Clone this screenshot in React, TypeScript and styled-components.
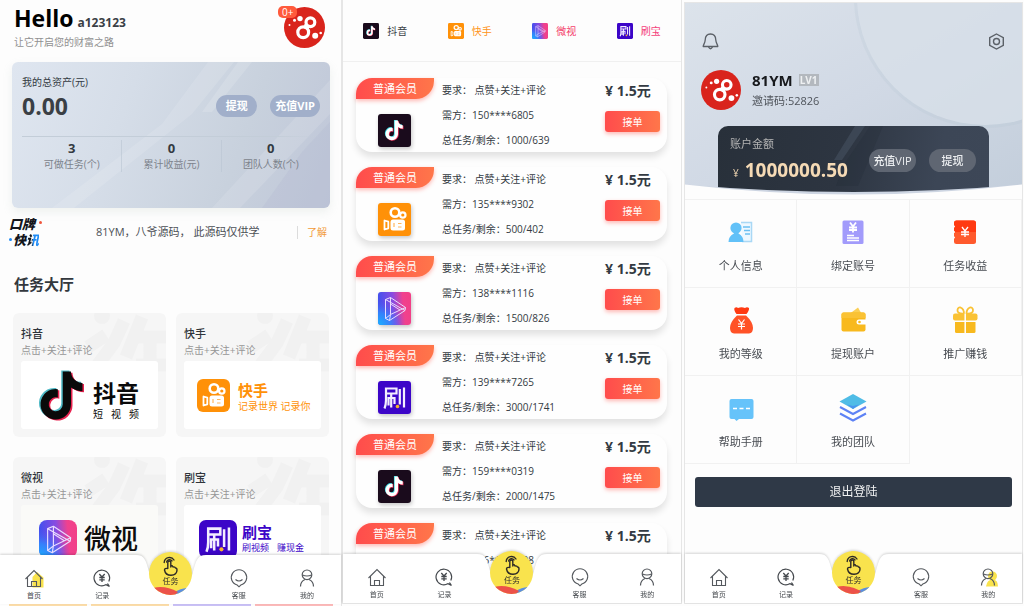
import React, { useId } from "react";
import styled, { createGlobalStyle } from "styled-components";

const GlobalStyle = createGlobalStyle`
  * { box-sizing: border-box; margin: 0; }
  body {
    background: #fdfdfd;
    color: #333a42;
    font-family: "Open Sans", "Noto Sans CJK SC", sans-serif;
    font-size: 10px;
    line-height: 16px;
  }
  button { font: inherit; border: 0; padding: 0; cursor: pointer; }
  a { color: inherit; text-decoration: none; }
  svg { display: block; flex: none; }
`;

/* ---------- shell ---------- */

const Screens = styled.div`
  display: grid;
  grid-template-columns: 342fr 342fr 340fr;
  height: 100vh;
  min-height: 480px;
  overflow: hidden;
`;

const Phone = styled.section<{ $variant: "home" | "tasks" | "mine" }>`
  position: relative;
  min-width: 0;
  min-height: 0;
  display: flex;
  flex-direction: column;
  background: #fdfdfd;
  border: solid #e6e6e6;
  border-width: ${p => (p.$variant === "home" ? "0 1px 0 0" : p.$variant === "tasks" ? "0 1px 1px" : "1px")};
  margin: ${p => (p.$variant === "home" ? "0" : p.$variant === "tasks" ? "0 2px 2px 0" : "2px 1px 2px 0")};
`;

const Scroll = styled.main`
  flex: 1;
  min-height: 0;
  overflow-y: auto;
  scrollbar-width: none;
`;

/* ---------- logos ---------- */

const Octopus = ({ size }: { size: number }) => (
  <svg width={size} height={size} viewBox="0 0 41 41" aria-hidden="true">
    <circle cx="20.5" cy="20.5" r="20.5" fill="#d9241c" />
    <g fill="none" stroke="#fff" strokeWidth="3.2">
      <circle cx="26.4" cy="15.2" r="4.4" />
      <circle cx="19.2" cy="25.2" r="5.4" />
    </g>
    <g fill="#fff">
      <path d="M20.500 17l5 2.500l-1.500 4l-4.500-2.500z" />
      <circle cx="16" cy="11.600" r="2.700" />
      <circle cx="10.500" cy="13.200" r="1.500" />
      <circle cx="5.500" cy="18" r="1" />
      <circle cx="31.200" cy="28.800" r="3" />
      <circle cx="36.700" cy="26" r="1.300" />
    </g>
  </svg>
);

const NOTE =
  "M448,209.91a210.06,210.06,0,0,1-122.77-39.25V349.38A162.55,162.55,0,1,1,185,188.31V278.2a74.62,74.62,0,1,0,52.23,71.18V0l88,0a121.18,121.18,0,0,0,1.86,22.17h0A122.18,122.18,0,0,0,381,102.39a121.43,121.43,0,0,0,67,20.14Z";

const DouyinNote = ({ width, height, fill }: { width: number; height: number; fill: string }) => (
  <svg width={width} height={height} viewBox="-16 -16 480 544" aria-hidden="true">
    <path d={NOTE} fill="#4fb9c6" transform="translate(-16 -12)" />
    <path d={NOTE} fill="#e8224f" transform="translate(16 12)" />
    <path d={NOTE} fill={fill} />
  </svg>
);

const DouyinApp = ({ size }: { size: number }) => (
  <svg width={size} height={size} viewBox="0 0 33 33" aria-hidden="true">
    <rect width="33" height="33" rx="3" fill="#1a0b1c" />
    <g transform="translate(7.500 6.500) scale(.0385)">
      <path d={NOTE} fill="#35d6e0" transform="translate(-18 -16)" />
      <path d={NOTE} fill="#f0325c" transform="translate(18 16)" />
      <path d={NOTE} fill="#fff" />
    </g>
  </svg>
);

const KuaishouApp = ({ size, radius = 3 }: { size: number; radius?: number }) => (
  <svg width={size} height={size} viewBox="0 0 33 33" aria-hidden="true">
    <rect width="33" height="33" rx={radius} fill="#ff9108" />
    <g fill="none" stroke="#fff">
      <circle cx="17" cy="9.500" r="4.300" strokeWidth="2.600" />
      <circle cx="24.800" cy="12" r="2.700" strokeWidth="2.200" />
      <path d="M6.500 17.500l3.800 1.200v6.600l-3.800 1.200z" strokeWidth="1.800" strokeLinejoin="round" />
    </g>
    <rect x="12.500" y="16.500" width="14.500" height="11" rx="2.500" fill="#fff" />
    <path d="M16 20v4M20 20.500h3.500M20 24h3.500" stroke="#ffb760" strokeWidth="1.200" />
  </svg>
);

const WeishiApp = ({ size, radius = 3 }: { size: number; radius?: number }) => {
  const id = useId();
  return (
    <svg width={size} height={size} viewBox="0 0 33 33" aria-hidden="true">
      <defs>
        <linearGradient id={id} x1="0" y1=".2" x2="1" y2=".1">
          <stop offset="0" stopColor="#4150ee" />
          <stop offset=".45" stopColor="#8a4be0" />
          <stop offset=".75" stopColor="#f0418e" />
          <stop offset="1" stopColor="#f23f86" />
        </linearGradient>
        <radialGradient id={id + "b"} cx="0" cy="1" r=".75">
          <stop offset="0" stopColor="#19b4ff" />
          <stop offset=".5" stopColor="#2f8dff" stopOpacity=".8" />
          <stop offset="1" stopColor="#5a5cf0" stopOpacity="0" />
        </radialGradient>
      </defs>
      <rect width="33" height="33" rx={radius} fill={`url(#${id})`} />
      <rect width="33" height="33" rx={radius} fill={`url(#${id}b)`} />
      <g fill="none" stroke="#e9dcff" strokeWidth="1" strokeLinejoin="round">
        <path d="M7.500 7.500L12.500 5.500L27.500 15.500L27 18.500L11.500 28.500L7.500 26.500Z" />
        <path d="M12.500 5.500V22.500L27.500 15.500M7.500 7.500L27 18.500M12.500 22.500L7.500 26.500M12.500 22.500L11.500 28.500M12.500 12L22 18" />
      </g>
    </svg>
  );
};

const ShuabaoApp = ({ size, radius = 3 }: { size: number; radius?: number }) => (
  <svg width={size} height={size} viewBox="0 0 33 33" aria-hidden="true">
    <rect width="33" height="33" rx={radius} fill="#3c05c8" />
    <g fill="none" stroke="#f3eeff" strokeWidth="2.200">
      <path d="M6.500 27.500Q8 24 8 19V7.500h10.500v5H8M13.200 13v13.500M10.500 24.500v-7.500h6V23" />
      <path d="M21.800 8v15.500M26 6.500v20" />
    </g>
    <circle cx="19.500" cy="25.500" r="1.800" fill="#f7b52c" />
  </svg>
);

/* ---------- bottom navigation ---------- */

const Dock = styled.div`
  position: absolute;
  left: 0;
  right: 0;
  bottom: 0;
`;

const NavBar = styled.nav`
  position: relative;
  height: 49px;
  filter: drop-shadow(0 -1px 1px rgba(0, 0, 0, 0.16));
`;

const NavBack = styled.div`
  position: absolute;
  inset: 0;
  display: flex;
`;

const NavSide = styled.span`
  flex: 1;
  background: #fff;
`;

const NavItems = styled.div`
  position: relative;
  display: grid;
  grid-template-columns: repeat(5, 1fr);
  height: 49px;
`;

const NavItem = styled.a`
  display: flex;
  flex-direction: column;
  align-items: center;
  padding-top: 13px;
  gap: 2px;
  color: #44484d;
  font-size: 7px;
  line-height: 12px;
`;

const NavCenter = styled.a`
  position: relative;
  justify-self: center;
  width: 43px;
  height: 43px;
  margin-top: -3px;
  border-radius: 50%;
  overflow: hidden;
  background: #f9e34d;
  display: flex;
  flex-direction: column;
  align-items: center;
  padding-top: 4px;
  color: #33302a;
  font-size: 8px;
  line-height: 10px;
`;

const NavSplash = styled.svg`
  position: absolute;
  left: 0;
  bottom: 0;
`;

const Strips = styled.div`
  display: flex;
  gap: 4px;
  height: 2px;
  padding: 0 8px 0 9px;
`;

const Strip = styled.span<{ $color: string }>`
  flex: 1;
  background: ${p => p.$color};
`;

const HomeIcon = ({ active }: { active?: boolean }) => (
  <svg width="20" height="20" viewBox="0 0 20 20" aria-hidden="true">
    {active && <path d="M13 4l6.500 5.500V19.500H8.500V9z" fill="#f9e34d" />}
    <path d="M1.500 11L10 2.500L18.500 11M3.500 9.500V18.500H16.500V9.500M7.500 18.500V13.500H12.500V18.500" fill="none" stroke="#55595e" strokeWidth="1.100" />
  </svg>
);

const RecordIcon = () => (
  <svg width="20" height="20" viewBox="0 0 20 20" fill="none" stroke="#44484d" strokeWidth="1.200" aria-hidden="true">
    <path d="M16.800 13.500A7.800 7.800 0 1 0 14 16.600M14 16.600l3.500 1.900M17.500 18.500l-2-3" />
    <path d="M7.300 6l2.700 3l2.700-3M10 9v5M7.300 9.500h5.400M7.300 11.800h5.400" strokeWidth="1.300" />
  </svg>
);

const ServiceIcon = () => (
  <svg width="20" height="20" viewBox="0 0 20 20" fill="none" stroke="#55595e" strokeWidth="1.100" aria-hidden="true">
    <path d="M8.200 17A7.700 7.700 0 1 1 11.800 17L10 18.800Z" />
    <path d="M6.500 11.500q3.500 3 7 0" />
  </svg>
);

const MineIcon = ({ active }: { active?: boolean }) => (
  <svg width="20" height="20" viewBox="0 0 20 20" aria-hidden="true">
    {active && (
      <g fill="#f9e34d">
        <circle cx="14.500" cy="9" r="4.500" />
        <path d="M8 19.500q1-7 6.500-7t5.500 7z" />
      </g>
    )}
    <g fill="none" stroke="#55595e" strokeWidth="1.200">
      <circle cx="10" cy="6.800" r="4.800" />
      <path d="M3.500 18.500q0-5 4.500-7M16.500 18.500q0-5-4.500-7M5.500 7q4.500 2 9 0" />
    </g>
  </svg>
);

const TouchIcon = () => (
  <svg width="18" height="20" viewBox="0 0 18 20" fill="none" stroke="#2d2a26" strokeWidth="1.400" strokeLinecap="round" strokeLinejoin="round" aria-hidden="true">
    <path d="M3.200 6.500A5.300 5.300 0 0 1 13 4" />
    <path d="M5.600 6A3 3 0 0 1 11 5" />
    <path d="M6.800 12.500V6.500a1.500 1.500 0 0 1 3 0V11M9.800 9.500q2 0 2.200 1.500q2-.5 2.500 1q1.500 0 1.500 2q0 5-6 5.300q-5.500 0-6.500-5.300q0-2 3.300-1.500" />
  </svg>
);

const BottomNav = ({ active }: { active?: "home" | "mine" }) => (
  <NavBar aria-label="底部导航">
    <NavBack>
      <NavSide />
      <svg width="70" height="49" viewBox="0 0 70 49" aria-hidden="true">
        <path d="M0 0C9 0 10 6 13 17A22.500 22.500 0 0 0 57 17C60 6 61 0 70 0V49H0Z" fill="#fff" />
      </svg>
      <NavSide />
    </NavBack>
    <NavItems>
      <NavItem href="#home"><HomeIcon active={active === "home"} />首页</NavItem>
      <NavItem href="#record"><RecordIcon />记录</NavItem>
      <NavCenter href="#tasks">
        <TouchIcon />
        任务
        <NavSplash width="43" height="8" viewBox="0 0 43 8" aria-hidden="true">
          <path d="M26 5q6-4 14-4v7H26z" fill="#5b8fe0" />
          <path d="M4 1q12-3 25 4l-3 3H8z" fill="#ec5249" />
        </NavSplash>
      </NavCenter>
      <NavItem href="#service"><ServiceIcon />客服</NavItem>
      <NavItem href="#mine"><MineIcon active={active === "mine"} />我的</NavItem>
    </NavItems>
  </NavBar>
);

/* ---------- home ---------- */

const HomeHeader = styled.header`
  display: flex;
  justify-content: space-between;
  height: 62px;
  padding: 3px 16px 0 14px;
`;

const Greeting = styled.h1`
  display: flex;
  align-items: baseline;
  gap: 4px;
  height: 30px;
  color: #000;
  font-size: 23px;
  line-height: 30px;
  font-weight: 700;
`;

const UserName = styled.span`
  color: #3a3f45;
  font-size: 12px;
  line-height: 16px;
`;

const Slogan = styled.p`
  color: #909090;
  line-height: 18px;
`;

const AvatarBox = styled.div`
  position: relative;
  height: 41px;
  margin-top: 4px;
`;

const Badge = styled.span`
  position: absolute;
  left: -6px;
  top: -1px;
  padding: 0 4px;
  border-radius: 5px;
  background: #ff5a3c;
  color: #fff;
  font-size: 10px;
  line-height: 12px;
`;

const AssetCard = styled.section`
  position: relative;
  overflow: hidden;
  margin: 0 11px 0 12px;
  padding: 12px 10px 36px;
  border-radius: 6px;
  background: linear-gradient(110deg, #dfe6f0 0%, #d5dde8 35%, #c8d1dd 70%, #bfc6d8 100%);
  box-shadow: 0 4px 10px rgba(160, 180, 170, 0.16);
`;

const Shine = styled.svg`
  position: absolute;
  inset: 0;
  width: 100%;
  height: 100%;
`;

const AssetBody = styled.div`
  position: relative;
`;

const AssetRow = styled.div`
  display: flex;
  align-items: center;
  gap: 13px;
  height: 32px;
`;

const Balance = styled.strong`
  flex: 1;
  color: #3a3f45;
  font-size: 23px;
  line-height: 32px;
`;

const SoftPill = styled.button`
  height: 22px;
  padding: 0 5px;
  min-width: 41px;
  border-radius: 11px;
  background: #a1afca;
  color: #fff;
  font-size: 11px;
  font-weight: 700;
`;

const Stats = styled.dl`
  display: grid;
  grid-template-columns: repeat(3, 1fr);
  margin-top: 14px;
  padding-top: 4px;
  background: linear-gradient(90deg, #c3cdd8 85%, transparent) top / 100% 1px no-repeat;
`;

const Stat = styled.div`
  display: flex;
  flex-direction: column-reverse;
  text-align: center;
  & + & { border-left: 1px solid rgba(185, 196, 210, 0.6); }
`;

const StatLabel = styled.dt`
  color: #7d838c;
`;

const StatValue = styled.dd`
  font-size: 13px;
  font-weight: 700;
`;

const Notice = styled.div`
  display: flex;
  align-items: center;
  height: 36px;
  margin-top: 6px;
  padding: 0 14px 0 9px;
`;

const NoticeLogo = styled.div`
  position: relative;
  width: 36px;
  color: #14161c;
  font-size: 13px;
  line-height: 16px;
  font-weight: 900;
  font-style: italic;
`;

const NoticeLine = styled.div<{ $indent?: boolean }>`
  padding-left: ${p => (p.$indent ? "4px" : "0")};
`;

const BlueGlyph = styled.span`
  background: linear-gradient(90deg, #14161c 45%, #1f8bf5 55%);
  background-clip: text;
  -webkit-background-clip: text;
  color: transparent;
`;

const Dot = styled.i<{ $end?: boolean }>`
  position: absolute;
  width: 3px;
  height: 3px;
  border-radius: 50%;
  ${p => (p.$end ? "right: 3px; top: 5px; background: #f0553c;" : "left: 0; bottom: 7px; background: #1f8bf5;")}
`;

const NoticeText = styled.p`
  flex: 1;
  min-width: 0;
  margin: 0 31px 0 51px;
  overflow: hidden;
  white-space: pre;
  color: #4c5056;
  font-size: 11px;
`;

const NoticeMore = styled.a`
  padding-left: 9px;
  border-left: 1px solid #dcdcdc;
  line-height: 13px;
  color: #f29a38;
`;

const SectionTitle = styled.h2`
  margin: 24px 14px 19px;
  color: #33383e;
  font-size: 15px;
  line-height: 20px;
  font-weight: 700;
`;

const TaskGrid = styled.div`
  display: grid;
  grid-template-columns: 1fr 1fr;
  gap: 20px 10px;
  padding: 0 12px 60px 13px;
`;

const TaskCard = styled.a`
  position: relative;
  overflow: hidden;
  padding: 12px 8px 8px;
  border-radius: 6px;
  background: #f6f6f6;
`;

const Watermark = styled.svg`
  position: absolute;
  right: 0;
  top: 0;
`;

const TaskName = styled.h3`
  position: relative;
  color: #30353b;
  font-size: 11px;
  line-height: 17px;
  font-weight: 500;
`;

const TaskHint = styled.p`
  position: relative;
  color: #969696;
`;

const BrandPanel = styled.div<{ $gap: number; $start: number; $tint?: boolean }>`
  position: relative;
  display: flex;
  align-items: center;
  gap: ${p => p.$gap}px;
  height: 68px;
  margin-top: 3px;
  padding-left: ${p => p.$start}px;
  border-radius: 3px;
  background: ${p => (p.$tint ? "#fafaf8" : "#fff")};
`;

const BrandText = styled.div<{ $color: string; $top?: number }>`
  padding-top: ${p => p.$top ?? 0}px;
  color: ${p => p.$color};
  white-space: nowrap;
`;

const BrandName = styled.div<{ $size: number; $line: number; $weight?: number }>`
  font-size: ${p => p.$size}px;
  line-height: ${p => p.$line}px;
  font-weight: ${p => p.$weight ?? 700};
`;

const BrandSub = styled.div<{ $size: number }>`
  display: flex;
  justify-content: space-between;
  gap: 8px;
  font-size: ${p => p.$size}px;
  line-height: 14px;
`;

const TaskTile = ({ name, children }: { name: string; children: React.ReactNode }) => (
  <TaskCard href="#tasks">
    <Watermark width="82" height="90" viewBox="0 0 82 90" aria-hidden="true">
      <g fill="none" stroke="#f1f1f1" strokeWidth="13">
        <path d="M22 22L4 34M40 8L30 30L6 62M22 48V72M58 4L42 44M48 24H82M66 24V90M52 52H82" />
      </g>
      <circle cx="18" cy="3" r="8" fill="#f1f1f1" />
    </Watermark>
    <TaskName>{name}</TaskName>
    <TaskHint>点击+关注+评论</TaskHint>
    {children}
  </TaskCard>
);

const HomeScreen = () => (
  <Phone $variant="home">
    <Scroll>
      <HomeHeader>
        <div>
          <Greeting>Hello<UserName>a123123</UserName></Greeting>
          <Slogan>让它开启您的财富之路</Slogan>
        </div>
        <AvatarBox>
          <Octopus size={41} />
          <Badge>0+</Badge>
        </AvatarBox>
      </HomeHeader>

      <AssetCard>
        <Shine viewBox="0 0 318 146" preserveAspectRatio="none" aria-hidden="true">
          <path d="M196 0L150 62L40 146H62L180 52L222 0Z" fill="#fff" opacity=".12" />
          <path d="M226 0L190 50H200L240 0Z" fill="#fff" opacity=".14" />
          <path d="M318 18L200 146H228L318 52Z" fill="#fff" opacity=".12" />
          <path d="M318 60L290 90L250 146H318Z" fill="#b4bbd2" opacity=".3" />
        </Shine>
        <AssetBody>
          <p>我的总资产(元)</p>
          <AssetRow>
            <Balance>0.00</Balance>
            <SoftPill type="button">提现</SoftPill>
            <SoftPill type="button">充值VIP</SoftPill>
          </AssetRow>
          <Stats>
            <Stat><StatLabel>可做任务(个)</StatLabel><StatValue>3</StatValue></Stat>
            <Stat><StatLabel>累计收益(元)</StatLabel><StatValue>0</StatValue></Stat>
            <Stat><StatLabel>团队人数(个)</StatLabel><StatValue>0</StatValue></Stat>
          </Stats>
        </AssetBody>
      </AssetCard>

      <Notice>
        <NoticeLogo>
          <NoticeLine>口牌</NoticeLine>
          <NoticeLine $indent>快<BlueGlyph>讯</BlueGlyph></NoticeLine>
          <Dot $end />
          <Dot />
        </NoticeLogo>
        <NoticeText>81YM，八爷源码， 此源码仅供学</NoticeText>
        <NoticeMore href="#notice">了解</NoticeMore>
      </Notice>

      <SectionTitle>任务大厅</SectionTitle>
      <TaskGrid>
        <TaskTile name="抖音">
          <BrandPanel $start={18} $gap={9}>
            <DouyinNote width={45} height={51} fill="#0a0a0a" />
            <BrandText $color="#0a0a0a" $top={9}>
              <BrandName $size={23} $line={28}>抖音</BrandName>
              <BrandSub $size={10}><span>短</span><span>视</span><span>频</span></BrandSub>
            </BrandText>
          </BrandPanel>
        </TaskTile>
        <TaskTile name="快手">
          <BrandPanel $start={13} $gap={8}>
            <KuaishouApp size={33} radius={6} />
            <BrandText $color="#ff9108" $top={4}>
              <BrandName $size={15} $line={18}>快手</BrandName>
              <BrandSub $size={10}>记录世界 记录你</BrandSub>
            </BrandText>
          </BrandPanel>
        </TaskTile>
        <TaskTile name="微视">
          <BrandPanel $start={18} $gap={7} $tint>
            <WeishiApp size={38} radius={7} />
            <BrandText $color="#0d0d0d">
              <BrandName $size={27} $line={38} $weight={500}>微视</BrandName>
            </BrandText>
          </BrandPanel>
        </TaskTile>
        <TaskTile name="刷宝">
          <BrandPanel $start={15} $gap={5}>
            <ShuabaoApp size={38} radius={6} />
            <BrandText $color="#3c05c8">
              <BrandName $size={15} $line={18}>刷宝</BrandName>
              <BrandSub $size={9}><span>刷视频</span><span>赚现金</span></BrandSub>
            </BrandText>
          </BrandPanel>
        </TaskTile>
      </TaskGrid>
    </Scroll>
    <Dock>
      <BottomNav active="home" />
      <Strips>
        {["#fbdca8", "#fbdca8", "#c9c0f5", "#fbb9b9"].map((c, i) => <Strip key={i} $color={c} />)}
      </Strips>
    </Dock>
  </Phone>
);

/* ---------- task list ---------- */

const Tabs = styled.div`
  display: grid;
  grid-template-columns: repeat(4, 1fr);
  height: 62px;
  border-bottom: 1px solid #f0f0f0;
`;

const Tab = styled.button<{ $color: string }>`
  display: flex;
  align-items: center;
  justify-content: center;
  gap: 8px;
  background: none;
  color: ${p => p.$color};
`;

const OrderList = styled.ul`
  display: grid;
  gap: 15px;
  padding: 16px 14px 60px 13px;
  list-style: none;
`;

const Order = styled.li`
  display: grid;
  grid-template-columns: 86px 1fr 62px;
  height: 74px;
  border-radius: 16px;
  background: #fefefe;
  box-shadow: 0 5px 7px rgba(0, 0, 0, 0.11);
`;

const LevelTag = styled.div`
  width: 78px;
  margin-bottom: 15px;
  border-radius: 16px 0 18px 0;
  background: linear-gradient(90deg, #ff4c4c, #ff764a);
  box-shadow: 0 2px 4px rgba(255, 80, 70, 0.4);
  color: #fff;
  font-size: 11px;
  line-height: 21px;
  text-align: center;
`;

const OrderIcon = styled.div`
  width: 33px;
  margin-left: 22px;
  border-radius: 3px;
  box-shadow: 1px 2px 4px rgba(0, 0, 0, 0.22);
`;

const OrderInfo = styled.div`
  line-height: 25px;
  white-space: pre;
`;

const Price = styled.strong`
  display: block;
  font-size: 14px;
  line-height: 25px;
  font-weight: 700;
  white-space: nowrap;
`;

const TakeButton = styled.button`
  width: 55px;
  height: 21px;
  margin-top: 8px;
  border-radius: 3px;
  background: linear-gradient(90deg, #ff4c4c, #ff764a);
  box-shadow: 0 2px 4px rgba(255, 80, 70, 0.4);
  color: #fff;
`;

const orders = [
  { icon: DouyinApp, from: "150****6805", count: "1000/639" },
  { icon: KuaishouApp, from: "135****9302", count: "500/402" },
  { icon: WeishiApp, from: "138****1116", count: "1500/826" },
  { icon: ShuabaoApp, from: "139****7265", count: "3000/1741" },
  { icon: DouyinApp, from: "159****0319", count: "2000/1475" },
  { icon: KuaishouApp, from: "156****2208", count: "" },
];

const TasksScreen = () => (
  <Phone $variant="tasks">
    <Tabs>
      <Tab type="button" $color="#3a3f45"><DouyinApp size={16} />抖音</Tab>
      <Tab type="button" $color="#ff9420"><KuaishouApp size={16} />快手</Tab>
      <Tab type="button" $color="#f4426c"><WeishiApp size={16} />微视</Tab>
      <Tab type="button" $color="#f4427c"><ShuabaoApp size={16} />刷宝</Tab>
    </Tabs>
    <Scroll>
      <OrderList>
        {orders.map(({ icon: Icon, from, count }) => (
          <Order key={from}>
            <div>
              <LevelTag>普通会员</LevelTag>
              <OrderIcon><Icon size={33} /></OrderIcon>
            </div>
            <OrderInfo>
              <p>要求： 点赞+关注+评论</p>
              <p>需方：{from}</p>
              {count && <p>总任务/剩余：{count}</p>}
            </OrderInfo>
            <div>
              <Price>¥ 1.5元</Price>
              <TakeButton type="button">接单</TakeButton>
            </div>
          </Order>
        ))}
      </OrderList>
    </Scroll>
    <Dock><BottomNav /></Dock>
  </Phone>
);

/* ---------- mine ---------- */

const Hero = styled.header`
  position: relative;
  height: 192px;
  overflow: hidden;
  background: linear-gradient(150deg, #dce3eb 0%, #d1d9e5 50%, #c3cedb 100%);
`;

const HeroBody = styled.div`
  position: relative;
`;

const TopBar = styled.div`
  display: flex;
  justify-content: space-between;
  padding: 30px 17px 0;
`;

const IconButton = styled.button`
  background: none;
`;

const Profile = styled.div`
  display: flex;
  align-items: center;
  gap: 11px;
  margin: 19px 16px 15px;
`;

const ProfileName = styled.h2`
  display: flex;
  align-items: center;
  gap: 6px;
  color: #17191c;
  font-size: 15px;
  line-height: 22px;
  font-weight: 700;
`;

const Level = styled.span`
  padding: 0 1px;
  background: #b3b8be;
  color: #eef0f2;
  font-size: 10px;
  line-height: 12px;
  font-weight: 700;
`;

const InviteCode = styled.p`
  color: #4f545b;
  font-size: 11px;
  line-height: 20px;
`;

const Wallet = styled.section`
  position: relative;
  display: flex;
  gap: 13px;
  height: 80px;
  margin: 0 33px;
  padding: 10px 13px 0 12px;
  overflow: hidden;
  border-radius: 10px 10px 0 0;
  background: linear-gradient(100deg, #28303a 0%, #2d3541 45%, #3c4656 80%, #3d4757 100%);
`;

const WalletInfo = styled.div`
  position: relative;
  flex: 1;
  color: #b3b3b3;
  font-size: 11px;
`;

const Amount = styled.p`
  display: flex;
  align-items: baseline;
  gap: 6px;
  height: 24px;
  margin: 6px 0 0 3px;
  color: #f5dab5;
  font-size: 10px;
  line-height: 24px;
`;

const AmountValue = styled.strong`
  font-size: 19px;
`;

const WalletPill = styled.button`
  position: relative;
  width: 47px;
  height: 23px;
  margin-top: 13px;
  border-radius: 12px;
  background: #5f6672;
  color: #eceef0;
  font-size: 11px;
  font-weight: 500;
  white-space: nowrap;
`;

const HeroCurve = styled.svg`
  position: absolute;
  left: 0;
  bottom: 0;
  width: 100%;
  height: 12px;
`;

const MenuGrid = styled.nav`
  display: grid;
  grid-template-columns: repeat(3, 1fr);
  margin-top: 4px;
  border-top: 1px solid #f1f1f1;
`;

const MenuItem = styled.a`
  display: flex;
  flex-direction: column;
  align-items: center;
  gap: 10px;
  height: 88px;
  padding-top: 18px;
  border: solid #f1f1f1;
  border-width: 0 1px 1px 0;
  color: #484c52;
  font-size: 11px;
  line-height: 20px;
`;

const Logout = styled.button`
  display: block;
  width: calc(100% - 20px);
  height: 30px;
  margin: 13px 10px 70px;
  border-radius: 3px;
  background: #2f3947;
  color: #f0f1f2;
  font-size: 12px;
`;

const Glyph = ({ children }: { children: React.ReactNode }) => (
  <svg width="28" height="28" viewBox="0 0 28 28" aria-hidden="true">{children}</svg>
);

const Yuan = ({ x, y, w = 1.3 }: { x: number; y: number; w?: number }) => (
  <path d={`M${x - 3} ${y - 5}l3 4l3-4M${x} ${y - 1}v6M${x - 4} ${y}h8M${x - 4} ${y + 2.5}h8`} fill="none" stroke="#fff" strokeWidth={w} />
);

const BagYuan = () => (
  <path d="M11.500 13.500l3 4l3-4M14.500 17.500v6M11 18h7M11 20.500h7" fill="none" stroke="#fff" strokeWidth="1.200" />
);

const menu = [
  {
    label: "个人信息",
    icon: (
      <Glyph>
        <path d="M14 4.500h10.500v19H15" fill="#eef8ff" stroke="#a9d8f5" strokeWidth="1.500" />
        <path d="M16 9h7M17 12.500h6M18 16h5" stroke="#6cc0f2" strokeWidth="1.500" />
        <circle cx="9" cy="10" r="5.600" fill="#62c1f8" />
        <path d="M1.500 24q0-6 5.500-8.500V14h4.500v1.500Q16.500 18 16.500 24z" fill="#62c1f8" />
      </Glyph>
    ),
  },
  {
    label: "绑定账号",
    icon: (
      <Glyph>
        <rect x="3.500" y="2.500" width="21" height="23.500" rx="1.500" fill="#a29bfb" />
        <Yuan x={14} y={9.5} w={1.8} />
        <path d="M8 17.500h7M8 20h12M8 22.500h12" stroke="#fff" strokeWidth="1.400" />
      </Glyph>
    ),
  },
  {
    label: "任务收益",
    icon: (
      <Glyph>
        <rect x="3" y="2.500" width="22" height="23.500" rx="2.500" fill="#ff5a2d" />
        <path d="M5.500 2.500h17a2.500 2.500 0 0 1 2.500 2.500V14H3V5a2.500 2.500 0 0 1 2.500-2.500z" fill="#ff3a12" />
        <g fill="#fdfdfd">
          <circle cx="3" cy="8.500" r="1" />
          <circle cx="3" cy="14" r="1" />
          <circle cx="3" cy="19.500" r="1" />
        </g>
        <Yuan x={14} y={14} />
      </Glyph>
    ),
  },
  {
    label: "我的等级",
    icon: (
      <Glyph>
        <path d="M7.500 2q2-1.500 3.500 0q3.500-1.500 7 0q2-1.500 4 0q.5 2-2.500 6h-10q-3-4-2-6z" fill="#ff3a12" />
        <path d="M10 9.500h9q7 6.500 7 12.500q0 5-4 5.500H7q-4-.5-4-5.500q0-6 7-12.500z" fill="#ff5227" />
        <BagYuan />
      </Glyph>
    ),
  },
  {
    label: "提现账户",
    icon: (
      <Glyph>
        <path d="M11 7.500L19 1.500L22.500 7.500z" fill="#fbcf55" />
        <rect x="2.500" y="6.500" width="24" height="19" rx="2" fill="#f8b91e" />
        <path d="M4.500 6.500h20a2 2 0 0 1 2 2V12h-24V8.500a2 2 0 0 1 2-2z" fill="#fac234" />
        <path d="M27 13.500h-7a2.500 2.500 0 0 0 0 5h7z" fill="#fff" />
        <circle cx="20.500" cy="16" r="1.300" fill="#f8b91e" />
      </Glyph>
    ),
  },
  {
    label: "推广赚钱",
    icon: (
      <Glyph>
        <g fill="none" stroke="#fac234" strokeWidth="1.800">
          <path d="M13 7.500Q6 8 6.500 4Q7 1 9.500 1.500Q13 3 13 7.500z" />
          <path d="M15.500 7.500Q22.500 8 22 4Q21.500 1 19 1.500Q15.500 3 15.500 7.500z" />
        </g>
        <rect x="2" y="7.500" width="24.500" height="7" rx="2" fill="#fac234" />
        <path d="M4 16h20.500v9.500a1.500 1.500 0 0 1-1.500 1.500H5.500A1.500 1.500 0 0 1 4 25.500z" fill="#f8b91e" />
        <path d="M14.200 7.500V27" stroke="#fff" strokeWidth="1.500" />
      </Glyph>
    ),
  },
  {
    label: "帮助手册",
    icon: (
      <Glyph>
        <path d="M4.500 5h20a2 2 0 0 1 2 2v16a2 2 0 0 1-2 2H12l-2.500 2L7.500 25h-3a2 2 0 0 1-2-2V7a2 2 0 0 1 2-2z" fill="#66c3fa" />
        <path d="M6 14.500h4M12.500 14.500h4M19 14.500h4" stroke="#fff" strokeWidth="1.600" />
      </Glyph>
    ),
  },
  {
    label: "我的团队",
    icon: (
      <Glyph>
        <path d="M14 0L27.500 7.500L14 15L.5 7.500z" fill="#4fbce6" />
        <path d="M8 10.500L14 12L20 10.500L14 15z" fill="#4a94ee" />
        <path d="M1 13l13 7l13-7M1 19.500l13 7l13-7" fill="none" stroke="#5d82f5" strokeWidth="2" />
      </Glyph>
    ),
  },
];

const MineScreen = () => (
  <Phone $variant="mine">
    <Scroll>
      <Hero>
        <Shine viewBox="0 0 337 192" preserveAspectRatio="none" aria-hidden="true">
          <circle cx="300" cy="-6" r="131" fill="#b9c6d4" opacity=".25" />
          <circle cx="300" cy="-6" r="128" fill="#dbe2eb" opacity=".7" />
        </Shine>
        <HeroBody>
          <TopBar>
            <IconButton type="button" aria-label="通知">
              <svg width="17" height="17" viewBox="0 0 17 17" fill="none" stroke="#5b6067" strokeWidth="1.300" strokeLinejoin="round" aria-hidden="true">
                <path d="M8.500 1C4.800 1 3.300 3.600 3.200 7C3 10.500 1.200 11.500 1.200 13.500H15.800C15.800 11.500 14 10.500 13.800 7C13.700 3.600 12.200 1 8.500 1zM6.500 14q2 3.500 4 0" />
              </svg>
            </IconButton>
            <IconButton type="button" aria-label="设置">
              <svg width="17" height="17" viewBox="0 0 17 17" fill="none" stroke="#5b6067" strokeWidth="1.400" aria-hidden="true">
                <path d="M8.500 1l6.800 3.600v7.800L8.500 16l-6.800-3.600V4.600z" />
                <circle cx="8.500" cy="8.500" r="3" />
              </svg>
            </IconButton>
          </TopBar>
          <Profile>
            <Octopus size={40} />
            <div>
              <ProfileName>81YM<Level>LV1</Level></ProfileName>
              <InviteCode>邀请码:52826</InviteCode>
            </div>
          </Profile>
          <Wallet>
            <Shine viewBox="0 0 271 80" preserveAspectRatio="none" aria-hidden="true">
              <path d="M137 0L116 34L124 34L147 0z" fill="#4a5666" opacity=".5" />
              <path d="M152 0L125 40L118 60H140L165 0z" fill="#1f2630" opacity=".2" />
            </Shine>
            <WalletInfo>
              <p>账户金额</p>
              <Amount>¥<AmountValue>1000000.50</AmountValue></Amount>
            </WalletInfo>
            <WalletPill type="button">充值VIP</WalletPill>
            <WalletPill type="button">提现</WalletPill>
          </Wallet>
        </HeroBody>
        <HeroCurve viewBox="0 0 337 12" preserveAspectRatio="none" aria-hidden="true">
          <path d="M0 1.500Q168.500 16.500 337 1.500V12H0z" fill="#cdd5e2" />
          <path d="M0 1.500Q168.500 21.500 337 1.500V12H0z" fill="#fdfdfd" />
        </HeroCurve>
      </Hero>
      <MenuGrid>
        {menu.map(item => (
          <MenuItem key={item.label} href="#menu">
            {item.icon}
            {item.label}
          </MenuItem>
        ))}
      </MenuGrid>
      <Logout type="button">退出登陆</Logout>
    </Scroll>
    <Dock><BottomNav active="mine" /></Dock>
  </Phone>
);

export default function App() {
  return (
    <>
      <GlobalStyle />
      <Screens>
        <HomeScreen />
        <TasksScreen />
        <MineScreen />
      </Screens>
    </>
  );
}
